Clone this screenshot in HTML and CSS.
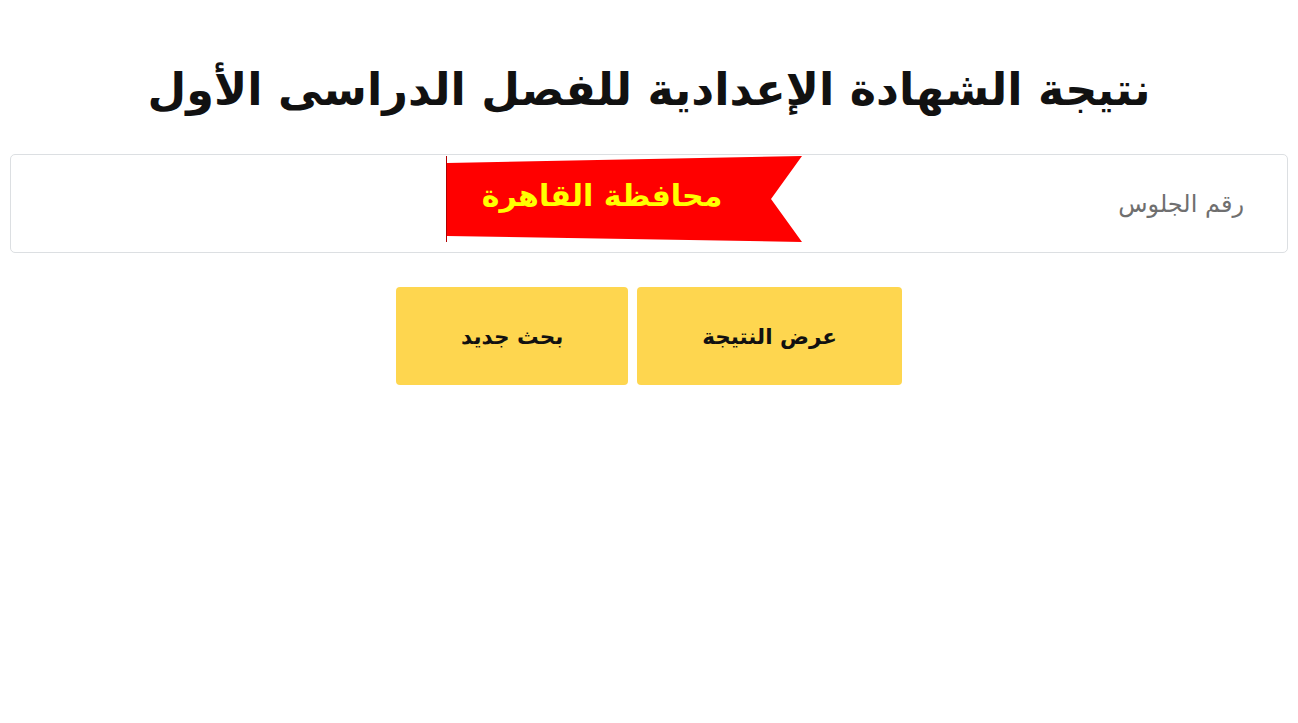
FILE: index.html
```html
<!DOCTYPE html>
<html lang="ar" dir="rtl">
<head>
<meta charset="utf-8">
<title>نتيجة الشهادة الإعدادية</title>
<link rel="stylesheet" href="styles.css">
</head>
<body>
<main class="page">
  <h1 class="title">نتيجة الشهادة الإعدادية للفصل الدراسى الأول</h1>
  <div class="field">
    <input class="seat-input" type="text" placeholder="رقم الجلوس">
    <div class="ribbon">
      <svg class="ribbon-shape" viewBox="0 0 356 86" width="356" height="86" aria-hidden="true">
        <polygon points="1,7 356,0 325,43 356,86 1,80" fill="#ff0000"/>
        <line x1="0.5" y1="0" x2="0.5" y2="86" stroke="#b00000" stroke-width="1"/>
      </svg>
      <span class="ribbon-text">محافظة القاهرة</span>
    </div>
  </div>
  <div class="actions">
    <button class="btn" type="button">عرض النتيجة</button>
    <button class="btn" type="button">بحث جديد</button>
  </div>
</main>
</body>
</html>
```
FILE: styles.css
```css
* { box-sizing: border-box; }
html, body { margin: 0; padding: 0; background: #fff; }
body {
  font-family: "DejaVu Sans", "Noto Sans", sans-serif;
  color: #111;
}
.page {
  padding: 0 10px;
}
.title {
  margin: 0;
  padding-top: 58px;
  height: 154px;
  text-align: center;
  font-size: 44.6px;
  font-weight: bold;
  line-height: 64px;
  color: #111;
}
.field {
  position: relative;
  height: 99px;
  width: 1278px;
}
.seat-input {
  display: block;
  width: 100%;
  height: 99px;
  border: 1px solid #dcdfe2;
  border-radius: 5px;
  padding: 0 43px;
  font-family: "DejaVu Sans", sans-serif;
  font-size: 24px;
  direction: rtl;
  background: #fff;
  outline: none;
}
.seat-input::placeholder { color: #6f6f6f; }
.ribbon {
  position: absolute;
  left: 436px;
  top: 2px;
  width: 356px;
  height: 86px;
}
.ribbon-shape { display: block; }
.ribbon-text {
  position: absolute;
  left: 0;
  width: 312px;
  top: 20px;
  text-align: center;
  font-family: "DejaVu Sans", sans-serif;
  font-size: 30px;
  font-weight: bold;
  color: #ffff00;
  line-height: 40px;
}
.actions {
  display: flex;
  justify-content: center;
  gap: 9px;
  margin-top: 34px;
}
.btn {
  height: 98px;
  padding: 0 65px;
  border: none;
  border-radius: 4px;
  background: #fed64f;
  font-family: "DejaVu Sans", sans-serif;
  font-size: 21.5px;
  font-weight: bold;
  color: #111;
}
```
